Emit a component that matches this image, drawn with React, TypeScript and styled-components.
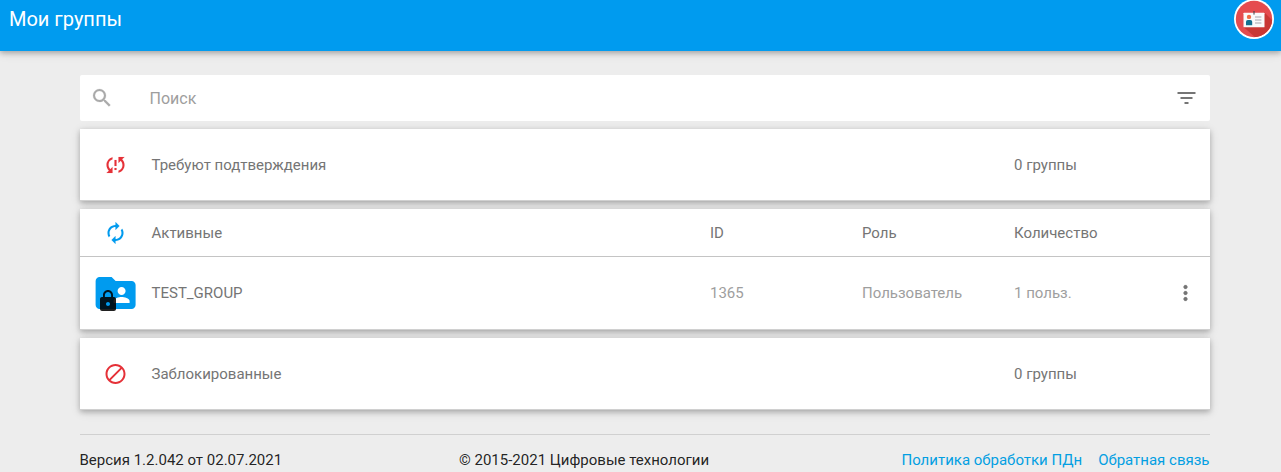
import React from "react";
import styled, { createGlobalStyle } from "styled-components";
import {
  MdAutorenew,
  MdFilterList,
  MdFolderShared,
  MdLock,
  MdMoreVert,
  MdNotInterested,
  MdSearch,
  MdSyncProblem,
} from "react-icons/md";

const GlobalStyle = createGlobalStyle`
  *, *::before, *::after { box-sizing: border-box; }
  body {
    margin: 0;
    background: #ededed;
    font-family: Roboto, "Liberation Sans", sans-serif;
    font-size: 15px;
    line-height: 22px;
    color: rgba(0, 0, 0, 0.87);
    overflow: hidden;
  }
  svg { display: block; flex: none; }
  svg path[fill="none"] { stroke: none; }
`;

const Page = styled.div`
  height: 472px;
  overflow: hidden;
`;

const Header = styled.header`
  display: flex;
  justify-content: space-between;
  align-items: flex-start;
  height: 51px;
  padding: 0 7px 0 9px;
  background: #009bef;
  box-shadow: 0 2px 5px rgba(0, 0, 0, 0.24), 0 2px 10px rgba(0, 0, 0, 0.12);
`;

const Title = styled.h1`
  margin: 0;
  color: #fff;
  font-size: 20px;
  font-weight: 400;
  line-height: 38px;
`;

const Avatar = styled.svg`
  margin-top: -1px;
`;

const Content = styled.main`
  width: 1130px;
  margin: 24px 0 0 79.5px;
`;

const SearchBar = styled.div`
  display: flex;
  align-items: center;
  height: 46px;
  margin-bottom: 8px;
  padding: 0 11.5px 0 10.5px;
  border-radius: 2px;
  background: #fff;
  color: #757575;
`;

const SearchIcon = styled(MdSearch)`
  color: #aaa;
  stroke-width: 0.2;
`;

const FilterIcon = styled(MdFilterList)`
  transform: translateX(0.5px);
`;

const SearchText = styled.span`
  flex: 1;
  margin-left: 35.5px;
  padding-top: 2px;
  color: #9e9e9e;
  font-size: 16px;
`;

const Card = styled.section`
  margin-bottom: 8px;
  border-bottom: 1px solid #d0d0d0;
  background: #fff;
  box-shadow: 0 2px 5px rgba(0, 0, 0, 0.22), 0 2px 10px rgba(0, 0, 0, 0.12);
`;

const Row = styled.div<{ $height: number; $divided?: boolean }>`
  display: grid;
  grid-template-columns: 72px 558.5px 152px 152px 1fr 36px;
  align-items: center;
  height: ${(p) => p.$height}px;
  border-bottom: ${(p) => (p.$divided ? "1px solid #c4c4c4" : "none")};
  color: #757575;
`;

const IconCell = styled.div<{ $color: string }>`
  display: flex;
  justify-content: center;
  color: ${(p) => p.$color};

  > svg {
    stroke-width: 0.1;
    transform: translateX(-0.5px);
  }
`;

const Cell = styled.span<{ $column?: number; $muted?: boolean }>`
  grid-column: ${(p) => p.$column ?? "auto"};
  color: ${(p) => (p.$muted ? "#9e9e9e" : "#757575")};
  white-space: nowrap;
`;

const GroupIcon = styled.div`
  position: relative;
  width: 48px;
  height: 48px;
`;

const FolderIcon = styled(MdFolderShared)`
  transform: translateX(-0.4px);
`;

const LockBadge = styled(MdLock)`
  position: absolute;
  left: 4px;
  bottom: 4px;
  color: rgba(0, 0, 0, 0.87);
`;

const MenuIcon = styled(MdMoreVert)`
  stroke-width: 0.2;
  transform: translateX(-0.5px);
`;

const BlockedMark = styled.div`
  transform: scaleX(-1) translateX(0.5px);
`;

const Footer = styled.footer`
  display: grid;
  grid-template-columns: 379.5px 1fr auto;
  margin-top: 24px;
  padding-top: 14px;
  border-top: 1px solid #d0d0d0;
`;

const Links = styled.nav`
  display: flex;
  gap: 16px;
`;

const Link = styled.a`
  color: #039fe2;
  text-decoration: none;
`;

const BadgeAvatar = () => (
  <Avatar width="40" height="40" viewBox="0 0 40 40">
    <defs>
      <clipPath id="disc">
        <circle cx="20" cy="20" r="18.2" />
      </clipPath>
    </defs>
    <circle cx="20" cy="20" r="20" fill="#fff" />
    <circle cx="20" cy="20" r="18.2" fill="#e54b4e" />
    <path d="M9.5 28 L30.5 13.5 L46 29 L30 46 Z" fill="#c93734" clipPath="url(#disc)" />
    <rect x="9.5" y="13.7" width="21" height="14.6" rx="0.6" fill="#fafafa" />
    <rect x="19.5" y="12" width="1" height="3.6" fill="#39424a" />
    <circle cx="15" cy="17.9" r="2.2" fill="#ef6c45" />
    <path d="M12 26.2v-3.4q0-1.8 1.8-1.8h2.6q1.8 0 1.8 1.8v3.4z" fill="#12708f" />
    <path d="M21 18h6.4M21 21h6.4M21 24h6.4" stroke="#d0d0d4" strokeWidth="1.8" />
  </Avatar>
);

export default function App() {
  return (
    <Page>
      <GlobalStyle />
      <Header>
        <Title>Мои группы</Title>
        <BadgeAvatar />
      </Header>
      <Content>
        <SearchBar>
          <SearchIcon size={24} />
          <SearchText>Поиск</SearchText>
          <FilterIcon size={24} />
        </SearchBar>
        <Card>
          <Row $height={71}>
            <IconCell $color="#e53138">
              <MdSyncProblem size={24} />
            </IconCell>
            <Cell>Требуют подтверждения</Cell>
            <Cell $column={5}>0 группы</Cell>
          </Row>
        </Card>
        <Card>
          <Row $height={48} $divided>
            <IconCell $color="#009bef">
              <MdAutorenew size={24} />
            </IconCell>
            <Cell>Активные</Cell>
            <Cell>ID</Cell>
            <Cell>Роль</Cell>
            <Cell>Количество</Cell>
          </Row>
          <Row $height={72}>
            <IconCell $color="#009bef">
              <GroupIcon>
                <FolderIcon size={48} />
                <LockBadge size={24} />
              </GroupIcon>
            </IconCell>
            <Cell>TEST_GROUP</Cell>
            <Cell $muted>1365</Cell>
            <Cell $muted>Пользователь</Cell>
            <Cell $muted>1 польз.</Cell>
            <MenuIcon size={24} />
          </Row>
        </Card>
        <Card>
          <Row $height={71}>
            <IconCell $color="#e53138">
              <BlockedMark>
                <MdNotInterested size={24} />
              </BlockedMark>
            </IconCell>
            <Cell>Заблокированные</Cell>
            <Cell $column={5}>0 группы</Cell>
          </Row>
        </Card>
        <Footer>
          <span>Версия 1.2.042 от 02.07.2021</span>
          <span>© 2015-2021 Цифровые технологии</span>
          <Links>
            <Link>Политика обработки ПДн</Link>
            <Link>Обратная связь</Link>
          </Links>
        </Footer>
      </Content>
    </Page>
  );
}
